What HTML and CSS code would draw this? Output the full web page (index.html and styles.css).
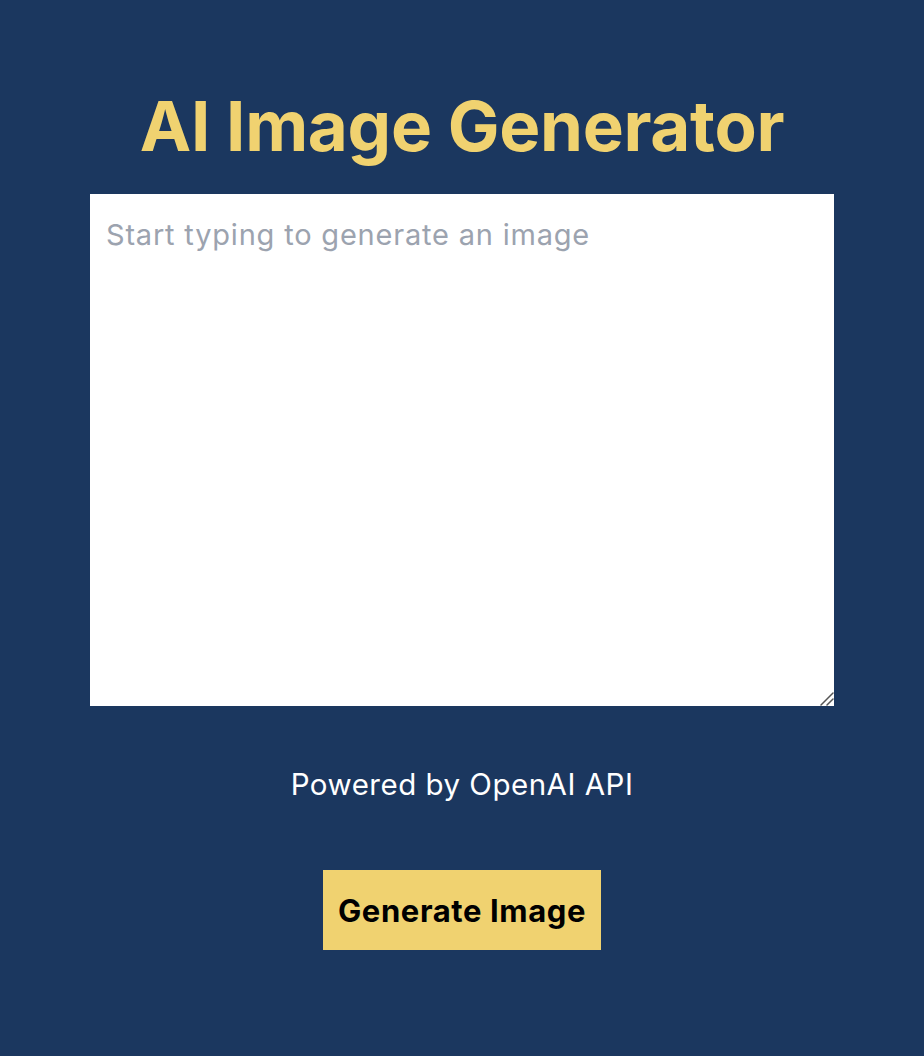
FILE: index.html
```html
<!DOCTYPE html>
<html>
<head>
<meta charset="utf-8">
<link rel="stylesheet" href="styles.css">
</head>
<body>
<main class="app">
  <h1 class="title">AI Image Generator</h1>
  <textarea class="prompt" placeholder="Start typing to generate an image"></textarea>
  <p class="powered">Powered by OpenAI API</p>
  <button class="generate">Generate Image</button>
</main>
</body>
</html>
```
FILE: styles.css
```css
html, body {
  margin: 0;
  padding: 0;
  background: #1b375f;
  height: 100%;
}
body {
  font-family: Inter, "Noto Sans", sans-serif;
}
.app {
  display: flex;
  flex-direction: column;
  align-items: center;
  padding: 84px 90px 0;
}
.title {
  margin: 0;
  color: #f0d270;
  font-size: 69px;
  font-weight: 700;
  line-height: 84px;
  letter-spacing: -0.3px;
}
.prompt {
  box-sizing: border-box;
  margin-top: 26px;
  width: 744px;
  height: 512px;
  border: none;
  outline: none;
  padding: 20px 16px;
  font-family: Inter, "Noto Sans", sans-serif;
  font-size: 29px;
  letter-spacing: 0.8px;
  line-height: 42px;
  color: #111;
  background: #fff;
  resize: vertical;
}
.prompt::placeholder {
  color: #9ca3af;
}
.prompt::-webkit-scrollbar {
  width: 16px;
  height: 16px;
  background: transparent;
}
.prompt::-webkit-resizer {
  background: url("data:image/svg+xml;utf8,<svg xmlns='http://www.w3.org/2000/svg' width='16' height='16'><path d='M3 15 L15 3 M9 15 L15 9' stroke='%23555' stroke-width='1.5' stroke-linecap='round'/></svg>") no-repeat right bottom;
}
.powered {
  margin: 58px 0 0;
  color: #fff;
  font-size: 29.5px;
  letter-spacing: 0.5px;
  line-height: 40px;
}
.generate {
  margin-top: 66px;
  width: 278px;
  height: 80px;
  border: none;
  background: #f0d270;
  color: #000;
  font-family: Inter, "Noto Sans", sans-serif;
  font-size: 31px;
  letter-spacing: 0.6px;
  font-weight: 700;
  cursor: pointer;
}
```
